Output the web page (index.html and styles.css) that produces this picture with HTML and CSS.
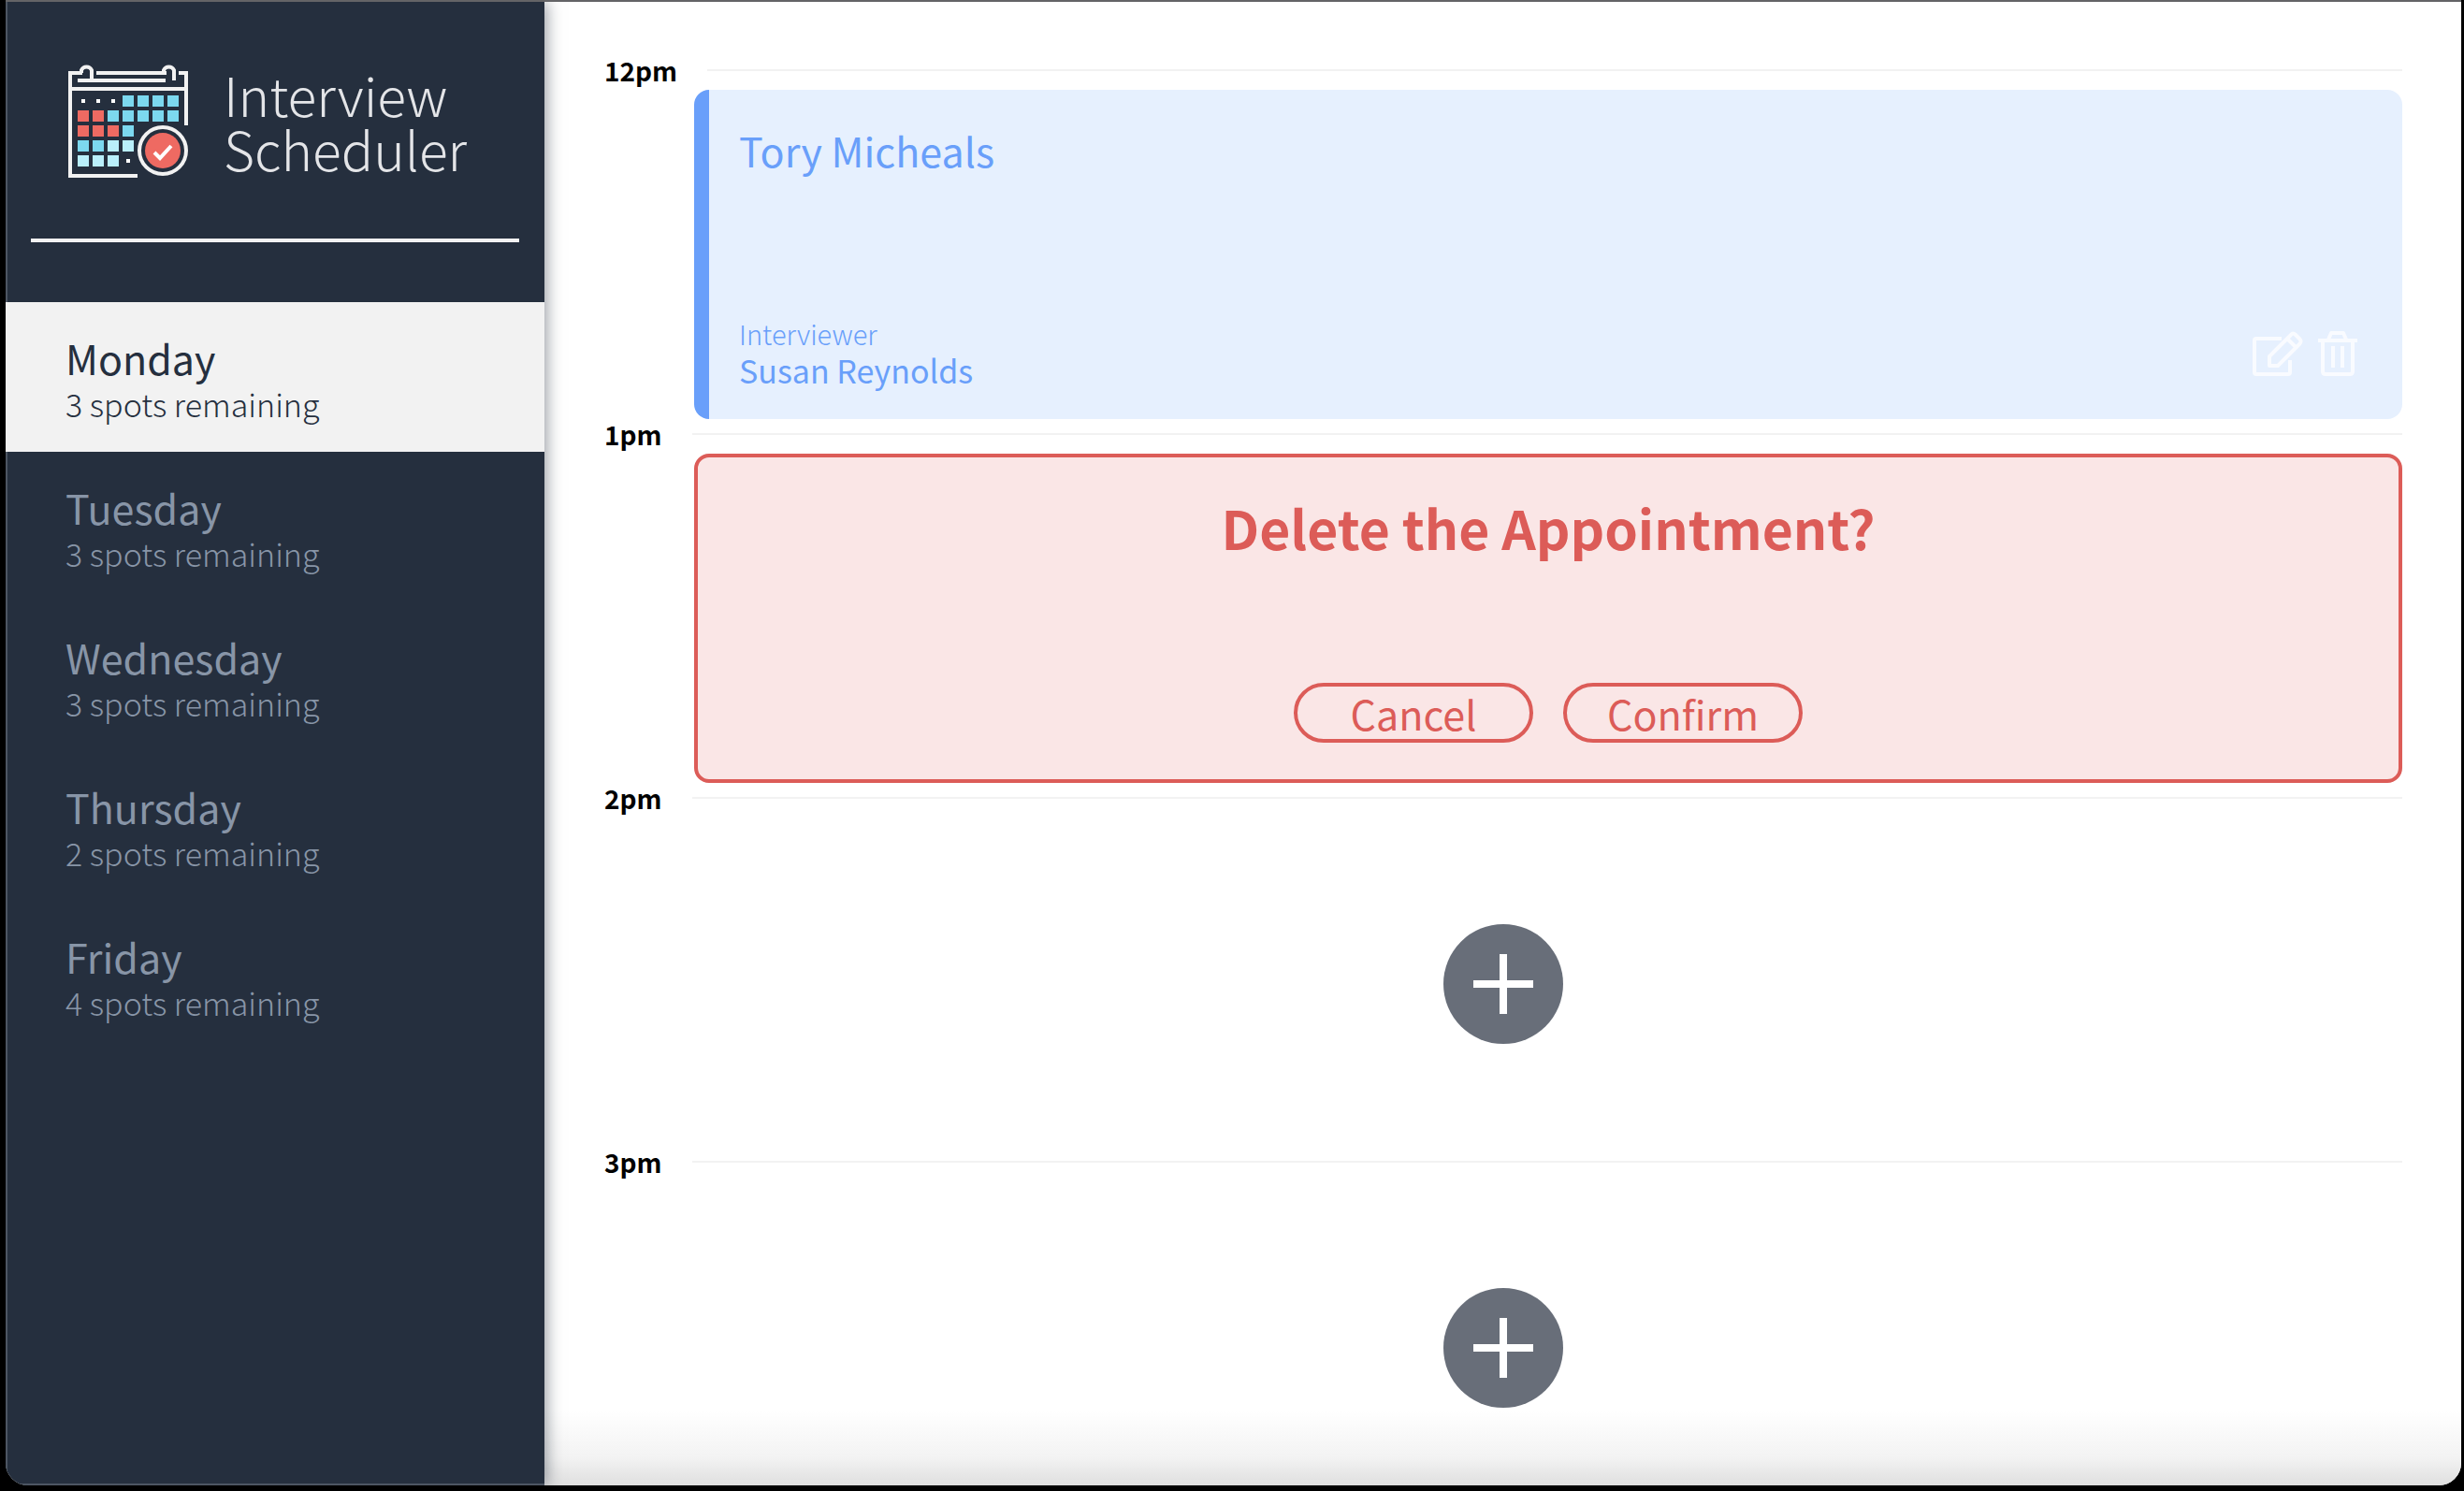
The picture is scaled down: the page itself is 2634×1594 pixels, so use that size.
FILE: index.html
```html
<!DOCTYPE html>
<html lang="en">
<head>
<meta charset="utf-8">
<meta name="viewport" content="width=device-width, initial-scale=1">
<title>Interview Scheduler</title>
<link rel="stylesheet" href="styles.css">
</head>
<body>
<div class="window">
  <aside class="sidebar">
    <div class="logo">
      <svg class="logo-mark" viewBox="0 0 130 122" aria-hidden="true">
        <g fill="none" stroke="#f2f2f2" stroke-width="4">
          <path d="M15 10H2V120H74M2 27H126M30 10H105M118 10H126V66M10 18H104"/>
          <path d="M14 10V7a6 6 0 0 1 11 0V18M102 10V7a6 6 0 0 1 11 0V18"/>
          <circle cx="101" cy="93" r="25"/>
        </g>
        <path fill="#7cd8ef" d="M58 34h12v12h-12zM74 34h12v12h-12zM90 34h12v12h-12zM106 34h12v12h-12zM42 50h12v12h-12zM58 50h12v12h-12zM74 50h12v12h-12zM90 50h12v12h-12zM106 50h12v12h-12zM58 66h12v12h-12zM10 82h12v12h-12zM26 82h12v12h-12z"/>
        <path fill="#b9effb" d="M42 82h12v12h-12zM58 82h12v12h-12zM10 98h12v12h-12zM26 98h12v12h-12zM42 98h12v12h-12z"/>
        <path fill="#ee6a62" d="M10 50h12v12h-12zM26 50h12v12h-12zM10 66h12v12h-12zM26 66h12v12h-12zM42 66h12v12h-12z"/>
        <path fill="#fff" d="M14 38h4v4h-4zM30 38h4v4h-4zM46 38h4v4h-4zM62 102h4v4h-4z"/>
        <circle cx="101" cy="93" r="19" fill="#ee6a62"/>
        <path d="M92 95l6 6 12-13" fill="none" stroke="#fff" stroke-width="4"/>
      </svg>
      <span class="logo-text">Interview<br>Scheduler</span>
    </div>
    <hr class="sidebar-rule">
    <nav class="days">
      <a class="day day--selected" href="#monday" aria-current="page"><span class="day-name">Monday</span><span class="day-spots">3 spots remaining</span></a>
      <a class="day" href="#tuesday"><span class="day-name">Tuesday</span><span class="day-spots">3 spots remaining</span></a>
      <a class="day" href="#wednesday"><span class="day-name">Wednesday</span><span class="day-spots">3 spots remaining</span></a>
      <a class="day" href="#thursday"><span class="day-name">Thursday</span><span class="day-spots">2 spots remaining</span></a>
      <a class="day" href="#friday"><span class="day-name">Friday</span><span class="day-spots">4 spots remaining</span></a>
    </nav>
  </aside>
  <main class="schedule">
    <article class="slot">
      <header class="slot-time"><h4>12pm</h4><hr></header>
      <section class="card card--show">
        <h2 class="student">Tory Micheals</h2>
        <div class="card-foot">
          <div>
            <h4 class="label">Interviewer</h4>
            <h3 class="interviewer">Susan Reynolds</h3>
          </div>
          <div class="card-actions">
            <button class="icon-button" type="button" aria-label="Edit">
              <svg width="54" height="48" viewBox="0 0 54 48"><g fill="none" stroke="#f9fbff" stroke-width="4" stroke-linejoin="round"><path d="M31 8H4Q2 8 2 10V44Q2 46 4 46H38Q40 46 40 44V31"/><path d="M18 27L41 4Q43 1 46 4L50 8Q53 11 50 14L27 37H18ZM37 8L46 17"/></g></svg>
            </button>
            <button class="icon-button" type="button" aria-label="Delete">
              <svg width="42" height="48" viewBox="0 0 42 48"><g fill="none" stroke="#f9fbff" stroke-width="4" stroke-linejoin="round"><path d="M0 10H42M5 10V43Q5 46 8 46H34Q37 46 37 43V10M11 9L14 2H27L30 9M16 16V39M26 16V39"/></g></svg>
            </button>
          </div>
        </div>
      </section>
    </article>
    <article class="slot">
      <header class="slot-time"><h4>1pm</h4><hr></header>
      <section class="card card--confirm">
        <h1 class="question">Delete the Appointment?</h1>
        <div class="confirm-actions">
          <button class="pill" type="button">Cancel</button>
          <button class="pill" type="button">Confirm</button>
        </div>
      </section>
    </article>
    <article class="slot">
      <header class="slot-time"><h4>2pm</h4><hr></header>
      <div class="empty">
        <button class="add" type="button" aria-label="Add"><svg width="128" height="128" viewBox="0 0 128 128"><circle cx="64" cy="64" r="64" fill="#686e79"/><path d="M64 32V96M32 64H96" stroke="#fff" stroke-width="8"/></svg></button>
      </div>
    </article>
    <article class="slot">
      <header class="slot-time"><h4>3pm</h4><hr></header>
      <div class="empty">
        <button class="add" type="button" aria-label="Add"><svg width="128" height="128" viewBox="0 0 128 128"><circle cx="64" cy="64" r="64" fill="#686e79"/><path d="M64 32V96M32 64H96" stroke="#fff" stroke-width="8"/></svg></button>
      </div>
    </article>
  </main>
</div>
</body>
</html>
```

FILE: styles.css
```css
* { box-sizing: border-box; }

body {
  margin: 0;
  height: 100vh;
  padding: 0 3px 6px 6px;
  background: linear-gradient(#1c0610, #340b18 60%, #4a1520 78%, #000 78%);
  font-family: "Noto Sans CJK SC", "Noto Sans", sans-serif;
  -webkit-font-smoothing: antialiased;
}

h1, h2, h3, h4, hr { margin: 0; }

button { padding: 0; border: 0; background: none; font: inherit; color: inherit; cursor: pointer; }

svg { display: block; }

.window {
  display: flex;
  height: 100%;
  overflow: hidden;
  border-top: 2px solid #646467;
  border-radius: 0 0 24px 24px;
  background: #fff;
  box-shadow: 0 0 0 40px #000;
}

.sidebar {
  z-index: 1;
  flex: none;
  width: 576px;
  background: #252f3e;
  box-shadow: inset 2px -2px #4d5663, 2px 0 16px rgba(37, 47, 62, .5);
}

.logo {
  display: flex;
  align-items: center;
  gap: 36px;
  height: 253px;
  padding-left: 67px;
}

.logo-mark { width: 130px; height: 122px; }

.logo-text { color: #e4e5e8; font-size: 57px; font-weight: 200; line-height: 58px; }

.sidebar-rule { height: 4px; margin: 0 27px; border: 0; background: #f2f2f2; }

.days { margin-top: 64px; }

.day {
  display: flex;
  flex-direction: column;
  height: 160px;
  padding: 35px 64px 0;
  color: #8895a7;
  text-decoration: none;
}

.day--selected { background: #f2f2f2; color: #252f3e; }

.day-name { font-size: 43px; line-height: 48px; }

.day-spots { font-size: 34px; font-weight: 300; line-height: 52px; }

.schedule {
  flex: 1;
  padding: 52px 63px 0 64px;
  background: linear-gradient(#fff calc(100% - 80px), #f3f3f3 calc(100% - 30px), #dfdfdf);
}

.slot { height: 389px; }

.slot-time { display: flex; align-items: center; gap: 32px; height: 42px; color: #000; font-size: 28px; }

.slot-time h4 { font-weight: 700; line-height: 42px; }

.slot-time hr { flex: 1; height: 2px; border: 0; background: #f2f2f2; }

.card { display: flex; flex-direction: column; height: 352px; margin-left: 96px; border-radius: 16px; }

.card--show {
  justify-content: space-between;
  padding: 32px 48px 32px 32px;
  border-left: 16px solid #699ffa;
  background: #e6f0fe;
  color: #699ffa;
}

.student { font-size: 43px; font-weight: 400; line-height: 64px; }

.card-foot { display: flex; justify-content: space-between; align-items: flex-end; }

.label { font-size: 29px; font-weight: 300; line-height: 40px; }

.interviewer { font-size: 34px; font-weight: 400; line-height: 40px; }

.card-actions { display: flex; gap: 16px; padding-bottom: 14px; }

.card--confirm {
  justify-content: space-between;
  align-items: center;
  padding: 32px 32px 39px;
  border: 4px solid #dc5c58;
  background: #fae6e6;
  color: #dc5c58;
}

.question { font-size: 57px; font-weight: 700; line-height: 84px; }

.confirm-actions { display: flex; gap: 32px; }

.pill {
  width: 256px;
  height: 64px;
  border: 4px solid #dc5c58;
  border-radius: 32px;
  font-size: 43px;
  line-height: 56px;
}

.empty { display: grid; place-items: center; height: 347px; padding-top: 8px; }
```
